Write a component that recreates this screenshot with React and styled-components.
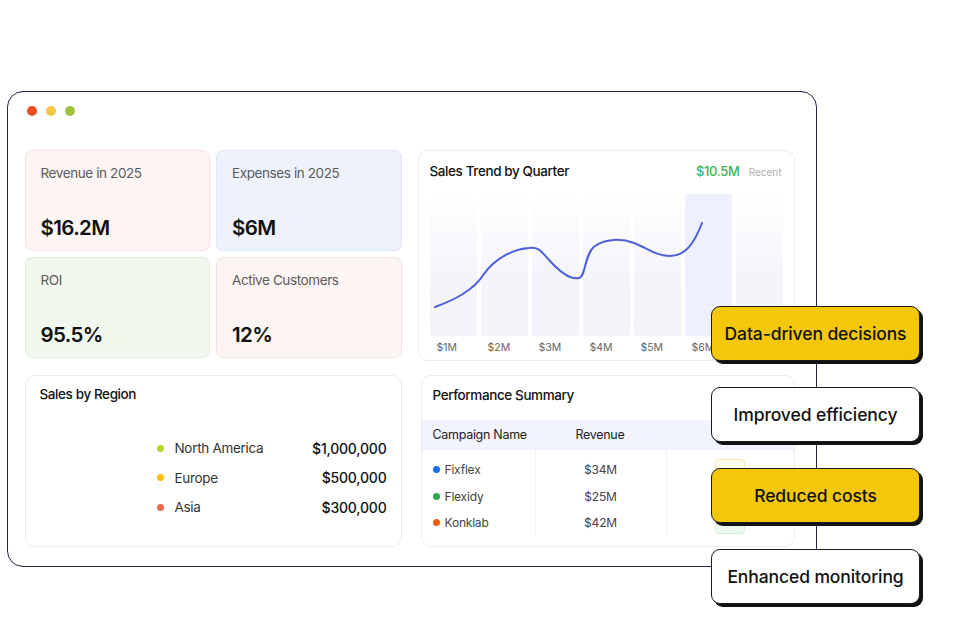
import styled, { createGlobalStyle } from "styled-components"

const GlobalStyle = createGlobalStyle`
  * { box-sizing: border-box; }
  body {
    margin: 0;
    background: #ffffff;
    font-family: Inter, "Noto Sans", sans-serif;
    color: #111;
  }
`

const Page = styled.div`
  position: relative;
  width: 960px;
  height: 634px;
  padding: 91px 0 0 7px;
  overflow: hidden;
`

// the browser-like window holding the dashboard
const Window = styled.div`
  width: 810px;
  height: 476px;
  border: 1.5px solid #26254a;
  border-radius: 16px;
  padding: 13.5px 19.5px 18.5px 16.5px;
  background: #fff;
`
const Dots = styled.div`
  display: flex;
  gap: 9px;
  margin: 0 0 34px 2px;
`
const Dot = styled.span`
  width: 10px;
  height: 10px;
  border-radius: 50%;
  background: ${(p) => p.color};
`
const Dashboard = styled.div`
  display: grid;
  grid-template-columns: 377px 377px;
  grid-template-rows: 211px 172px;
  column-gap: 16px;
  row-gap: 14px;
`

// stat cards
const Stats = styled.div`
  display: grid;
  grid-template-columns: 1fr 1fr;
  grid-template-rows: 101px 101px;
  gap: 6px;
`
const StatCard = styled.div`
  background: ${(p) => p.bg};
  border: 1px solid ${(p) => p.line};
  border-radius: 7px;
  padding: 13px 15px 10px;
  display: flex;
  flex-direction: column;
  justify-content: space-between;
`
const StatLabel = styled.div`
  font-size: 13.5px;
  color: #5b5b5b;
  letter-spacing: -0.4px;
  line-height: 18px;
`
const StatValue = styled.div`
  font-size: 20.5px;
  font-weight: 600;
  letter-spacing: -0.6px;
  line-height: 24px;
  color: #111;
`

// generic white panel
const Panel = styled.div`
  background: #fff;
  border: 1px solid #ececef;
  border-radius: 10px;
  padding: ${(p) => p.pad || "12px"};
  margin-left: ${(p) => p.shift || 0}px;
  overflow: hidden;
`
const PanelHead = styled.div`
  display: flex;
  align-items: center;
  justify-content: space-between;
  height: 16px;
  padding-left: ${(p) => p.indent || 0}px;
`
const PanelTitle = styled.div`
  font-size: 13.5px;
  font-weight: 500;
  letter-spacing: -0.4px;
  color: #111;
  line-height: 16px;
`
const Meta = styled.div`
  display: flex;
  align-items: baseline;
  gap: 9px;
`
const Amount = styled.span`
  color: #3db35b;
  font-size: 13px;
  font-weight: 500;
  letter-spacing: -0.3px;
`
const Muted = styled.span`
  color: #b0b0b0;
  font-size: 10px;
`

// chart
const Chart = styled.div`
  position: relative;
  margin-top: 15px;
`
const Bars = styled.div`
  display: grid;
  grid-template-columns: repeat(7, 47px);
  gap: 4px;
  height: 142px;
`
const Bar = styled.div`
  border-radius: 3px;
  background: ${(p) =>
    p.active
      ? "#eef0fd"
      : "linear-gradient(180deg, rgba(244,245,251,0) 0%, #f4f5fb 55%, #f3f4fa 100%)"};
`
const Line = styled.svg`
  position: absolute;
  left: 0;
  top: 0;
  overflow: visible;
`
const Axis = styled.div`
  display: grid;
  grid-template-columns: repeat(7, 47px);
  gap: 4px;
  margin-top: 5px;
`
const Tick = styled.span`
  font-size: 10.5px;
  color: #666;
  padding-left: 7px;
  line-height: 14px;
`

// sales by region
const RegionList = styled.div`
  width: 230px;
  margin: 32px 0 0 auto;
`
const RegionRow = styled.div`
  display: grid;
  grid-template-columns: 18px 1fr auto;
  align-items: center;
  height: 29.5px;
`
const Bullet = styled.span`
  width: ${(p) => p.size || 7}px;
  height: ${(p) => p.size || 7}px;
  border-radius: 50%;
  background: ${(p) => p.color};
`
const RegionName = styled.span`
  font-size: 13.5px;
  color: #333;
  letter-spacing: -0.3px;
`
const RegionValue = styled.span`
  font-size: 14px;
  font-weight: 500;
  color: #111;
  letter-spacing: -0.2px;
`

// performance table
const TableHead = styled.div`
  display: grid;
  grid-template-columns: 113px 131px 1fr;
  align-items: center;
  height: 30px;
  margin-top: 17px;
  background: #f1f3fd;
`
const HeadCell = styled.span`
  font-size: 12.5px;
  color: #222;
  letter-spacing: -0.3px;
  padding-left: ${(p) => (p.center ? 0 : 11)}px;
  text-align: ${(p) => (p.center ? "center" : "left")};
`
const TableBody = styled.div`
  display: grid;
  grid-template-columns: 113px 131px 1fr;
  height: 84px;
`
const Column = styled.div`
  display: flex;
  flex-direction: column;
  padding-top: 7px;
  border-left: ${(p) => (p.first ? "none" : "1px solid #f1f2f6")};
`
const Cell = styled.div`
  height: 26.5px;
  display: flex;
  align-items: center;
  justify-content: ${(p) => (p.center ? "center" : "flex-start")};
  gap: 5px;
  padding-left: ${(p) => (p.center ? 0 : 11)}px;
  font-size: 12px;
  color: #444;
  letter-spacing: -0.2px;
`
const Badge = styled.span`
  width: 30px;
  height: 22px;
  border-radius: 4px;
  background: ${(p) => p.bg};
  border: 1px solid ${(p) => p.line};
`

// callouts over the right edge
const Callouts = styled.div`
  position: absolute;
  left: 711px;
  top: 306px;
  display: flex;
  flex-direction: column;
  gap: 26px;
`
const Callout = styled.div`
  width: 209px;
  height: 55px;
  display: flex;
  align-items: center;
  justify-content: center;
  background: ${(p) => (p.accent ? "#f4c70a" : "#fff")};
  border: 1.5px solid #1b1b1b;
  border-radius: 9px;
  box-shadow: 3px 3px 0 #111;
  font-size: 17.5px;
  font-weight: 500;
  letter-spacing: -0.1px;
  color: #111;
`

const stats = [
  { label: "Revenue in 2025", value: "$16.2M", bg: "#fdf5f3", line: "#f3e6e2" },
  { label: "Expenses in 2025", value: "$6M", bg: "#eef2fd", line: "#e1e6f6" },
  { label: "ROI", value: "95.5%", bg: "#f1f8ee", line: "#e2eedd" },
  { label: "Active Customers", value: "12%", bg: "#fdf5f3", line: "#f3e6e2" },
]

const regions = [
  { name: "North America", value: "$1,000,000", color: "#b5d62f" },
  { name: "Europe", value: "$500,000", color: "#f9c10f" },
  { name: "Asia", value: "$300,000", color: "#e8684a" },
]

const campaigns = [
  { name: "Fixflex", revenue: "$34M", color: "#1a6ef5", bg: "#fffcee", line: "#f6e7a8" },
  { name: "Flexidy", revenue: "$25M", color: "#2fa84f", bg: "#eef3ff", line: "#d8e1fb" },
  { name: "Konklab", revenue: "$42M", color: "#f25c19", bg: "#ecf9ef", line: "#cdeed6" },
]

// the 7th column's label sits behind the callouts, so it is left empty
const ticks = ["$1M", "$2M", "$3M", "$4M", "$5M", "$6M", ""]

const App = () => {
  return (
    <>
      <GlobalStyle />
      <Page>
        <Window>
          <Dots>
            <Dot color="#ee4e1f" />
            <Dot color="#f8c742" />
            <Dot color="#9dc23e" />
          </Dots>
          <Dashboard>
            <Stats>
              {stats.map((s) => (
                <StatCard key={s.label} bg={s.bg} line={s.line}>
                  <StatLabel>{s.label}</StatLabel>
                  <StatValue>{s.value}</StatValue>
                </StatCard>
              ))}
            </Stats>

            <Panel pad="12px 12px 12px 11px">
              <PanelHead>
                <PanelTitle>Sales Trend by Quarter</PanelTitle>
                <Meta>
                  <Amount>$10.5M</Amount>
                  <Muted>Recent</Muted>
                </Meta>
              </PanelHead>
              <Chart>
                <Bars>
                  {ticks.map((t, i) => (
                    <Bar key={i} active={i === 5} />
                  ))}
                </Bars>
                <Line width="353" height="142" viewBox="0 0 353 142">
                  <path
                    d="M5 113 C24 106 43 97 54 80 C65 64 84 55 99 54 C109 53 110 56 120 67 C130 78 140 86 149 84 C156 83 154 60 165 52 C175 45 191 44 204 49 C219 55 227 62 240 62 C255 62 264 50 272 29"
                    fill="none"
                    stroke="#4d5fdc"
                    strokeWidth="2"
                    strokeLinecap="round"
                  />
                </Line>
                <Axis>
                  {ticks.map((t, i) => (
                    <Tick key={i}>{t}</Tick>
                  ))}
                </Axis>
              </Chart>
            </Panel>

            <Panel pad="10px 14px 0 14px">
              <PanelTitle>Sales by Region</PanelTitle>
              <RegionList>
                {regions.map((r) => (
                  <RegionRow key={r.name}>
                    <Bullet color={r.color} />
                    <RegionName>{r.name}</RegionName>
                    <RegionValue>{r.value}</RegionValue>
                  </RegionRow>
                ))}
              </RegionList>
            </Panel>

            <Panel pad="11px 0 0 0" shift={3}>
              <PanelHead indent={11}>
                <PanelTitle>Performance Summary</PanelTitle>
              </PanelHead>
              <TableHead>
                <HeadCell>Campaign Name</HeadCell>
                <HeadCell center>Revenue</HeadCell>
                <HeadCell center>Status</HeadCell>
              </TableHead>
              <TableBody>
                <Column first>
                  {campaigns.map((c) => (
                    <Cell key={c.name}>
                      <Bullet color={c.color} size={7} />
                      {c.name}
                    </Cell>
                  ))}
                </Column>
                <Column>
                  {campaigns.map((c) => (
                    <Cell key={c.name} center>
                      {c.revenue}
                    </Cell>
                  ))}
                </Column>
                <Column>
                  {campaigns.map((c) => (
                    <Cell key={c.name} center>
                      <Badge bg={c.bg} line={c.line} />
                    </Cell>
                  ))}
                </Column>
              </TableBody>
            </Panel>
          </Dashboard>
        </Window>

        <Callouts>
          <Callout accent>Data-driven decisions</Callout>
          <Callout>Improved efficiency</Callout>
          <Callout accent>Reduced costs</Callout>
          <Callout>Enhanced monitoring</Callout>
        </Callouts>
      </Page>
    </>
  )
}

export default App
